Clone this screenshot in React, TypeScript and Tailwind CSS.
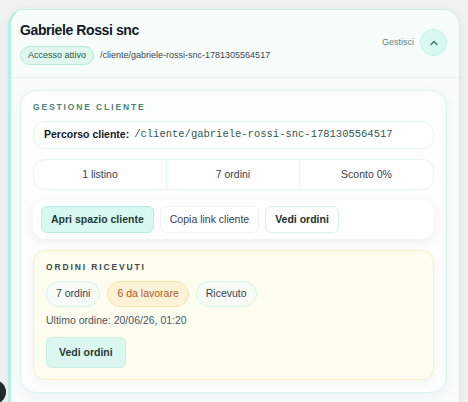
import React from 'react';

const ChevronUp = () => (
  <svg width="12" height="12" viewBox="0 0 24 24" fill="none" stroke="#3f6f64" strokeWidth="2.5" strokeLinecap="round" strokeLinejoin="round">
    <path d="M6 15l6-6 6 6" />
  </svg>
);

export default function App() {
  return (
    <div className="relative h-[402px] overflow-hidden bg-[#eef3f2] pl-2 pr-2 pt-[9px] font-['Liberation_Sans',Arial,sans-serif] text-[#1f2937]">
      <div className="rounded-t-2xl border border-l-[3px] border-[#c9f2e7] border-l-[#b3f0e0] bg-[#f6fdfb] shadow-[0_2px_10px_rgba(0,0,0,0.05)]">
        {/* header */}
        <div className="flex items-center justify-between border-b border-[#e2f6f0] pl-[9px] pr-3 pt-[10px] pb-[12px]">
          <div className="flex flex-col gap-[6px]">
            <h2 className="text-[14px] font-bold leading-5 tracking-[-0.4px] text-[#111827]">Gabriele Rossi snc</h2>
            <div className="flex items-center gap-[6px]">
              <span className="flex h-[19px] items-center rounded-full border border-[#b5e9d8] bg-[#dff7ef] px-[7px] text-[9px] text-[#2a5a4c]">Accesso attivo</span>
              <span className="text-[9px] text-[#3b4450]">/cliente/gabriele-rossi-snc-1781305564517</span>
            </div>
          </div>
          <div className="flex items-center gap-[6px]">
            <span className="text-[9px] text-[#6b7f7a]">Gestisci</span>
            <div className="flex h-[27px] w-[27px] items-center justify-center rounded-full border border-[#c6f2e6] bg-[#d7f9f1]">
              <ChevronUp />
            </div>
          </div>
        </div>

        {/* body */}
        <div className="bg-[#f8fdfc] pl-[9px] pr-3 pt-[12px]">
          <div className="rounded-2xl border border-[#d9f6ee] bg-[#fbfefd] px-3 pt-[10px] pb-3 shadow-[0_4px_14px_rgba(0,60,50,0.05)]">
            <div className="text-[8.5px] font-bold uppercase leading-3 tracking-[0.22em] text-[#4b8477]">Gestione cliente</div>

            <div className="mt-[8px] flex h-[28px] items-center rounded-xl border border-[#e2f7f1] bg-white px-[10px] text-[10.5px]">
              <span className="font-bold text-[#111827]">Percorso cliente:</span>
              <span className="ml-[5px] font-['Liberation_Mono',monospace] text-[10.5px] text-[#2f5a52]">/cliente/gabriele-rossi-snc-1781305564517</span>
            </div>

            <div className="mt-[10px] grid h-[31px] grid-cols-3 rounded-xl border border-[#e2f7f1] bg-white text-[10.5px] text-[#374151]">
              <div className="flex items-center justify-center border-r border-[#e6f7f2]">1 listino</div>
              <div className="flex items-center justify-center border-r border-[#e6f7f2]">7 ordini</div>
              <div className="flex items-center justify-center">Sconto 0%</div>
            </div>

            <div className="mt-[10px] flex gap-[6px] rounded-xl bg-white px-2 py-[6px] shadow-[0_3px_10px_rgba(0,50,40,0.07)]">
              <button className="h-[27px] rounded-md border border-[#b7eedf] bg-[#d8f8f2] px-[9px] text-[10.5px] font-bold text-[#1f3b35]">Apri spazio cliente</button>
              <button className="h-[27px] rounded-md border border-[#eef3f2] bg-white px-[9px] text-[10.5px] text-[#374151]">Copia link cliente</button>
              <button className="h-[27px] rounded-md border border-[#d2f4ea] bg-white px-[9px] text-[10.5px] font-bold text-[#1f2f2c]">Vedi ordini</button>
            </div>

            <div className="mt-[11px] rounded-xl border border-[#fbefc3] bg-[#fdfdf0] px-3 pt-[10px] pb-[11px] shadow-[0_3px_10px_rgba(0,0,0,0.04)]">
              <div className="text-[8.5px] font-bold uppercase leading-3 tracking-[0.22em] text-[#3f4a52]">Ordini ricevuti</div>
              <div className="mt-[8px] flex gap-[7px] text-[10.5px]">
                <span className="flex h-[26px] items-center rounded-full border border-[#d7f5ec] bg-[#f6fcf5] px-[9px] text-[#374151]">7 ordini</span>
                <span className="flex h-[26px] items-center rounded-full border border-[#fbe3a8] bg-[#fdf2d6] px-[9px] text-[#b2582c]">6 da lavorare</span>
                <span className="flex h-[26px] items-center rounded-full border border-[#d7f5ec] bg-[#f6fcf5] px-[9px] text-[#374151]">Ricevuto</span>
              </div>
              <div className="mt-[6px] text-[10.5px] leading-[14px] text-[#4b5563]">Ultimo ordine: 20/06/26, 01:20</div>
              <button className="mt-[10px] h-[31px] rounded-md border border-[#c7f1e4] bg-[#dcf7ef] px-3 text-[10.5px] font-bold text-[#1f3b35]">Vedi ordini</button>
            </div>
          </div>
          <div className="h-6" />
        </div>
      </div>

      <div className="absolute bottom-[-2px] left-[-18px] h-[24px] w-[24px] rounded-full bg-[#1f2a2a]" />
    </div>
  );
}
